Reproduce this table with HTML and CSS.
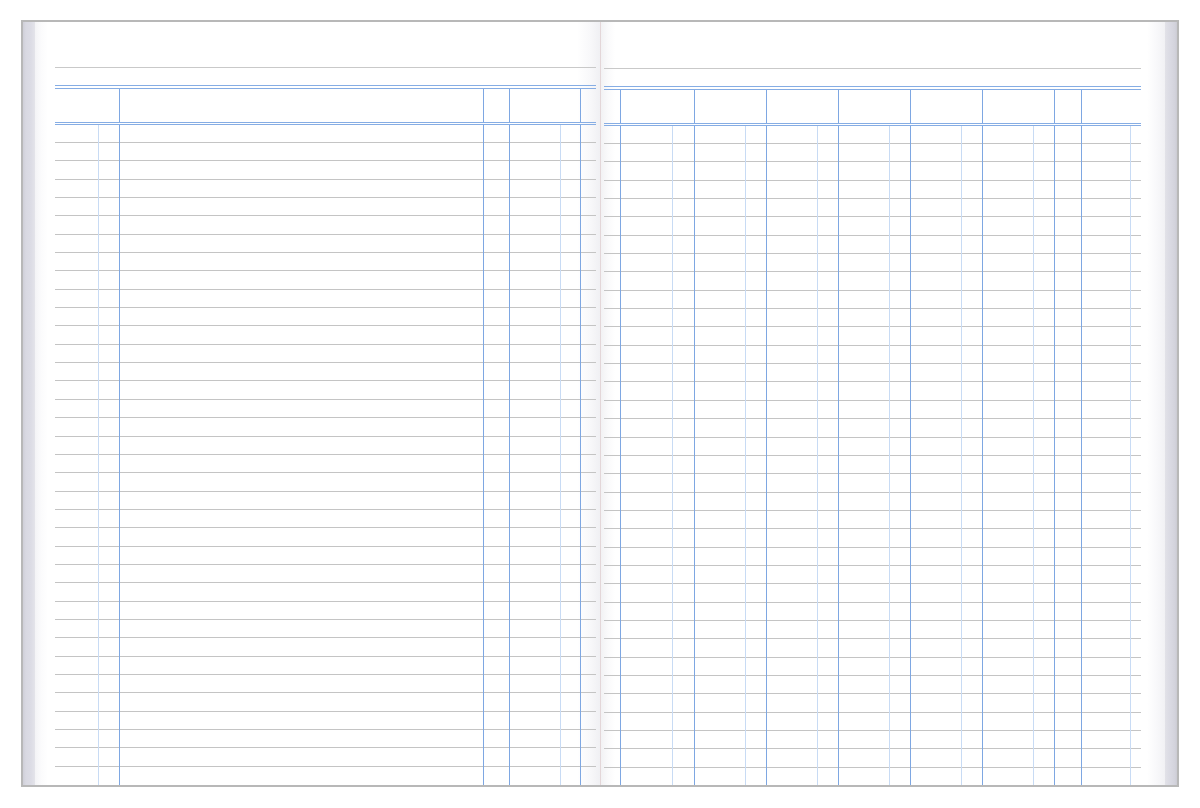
FILE: index.html
```html
<!DOCTYPE html>
<html lang="en">
<head>
<meta charset="utf-8">
<title>Ledger book spread</title>
<link rel="stylesheet" href="styles.css">
</head>
<body>
<div class="book">
  <div class="edge edge-left"></div>

  <section class="page page-left">
    <div class="sheet">
      <div class="rule-gray"></div>
      <div class="rule-blue rule-first"></div>
      <div class="rule-blue rule-pair"></div>
      <div class="head head-left">
        <div class="cell"></div><div class="cell dk"></div><div class="cell dk"></div><div class="cell dk"></div><div class="cell dk"></div>
      </div>
      <div class="rule-blue"></div>
      <div class="rule-blue rule-pair-tight"></div>
      <div class="body">
        <div class="rows">
          <div class="row"></div><div class="row"></div><div class="row"></div><div class="row"></div><div class="row"></div>
          <div class="row"></div><div class="row"></div><div class="row"></div><div class="row"></div><div class="row"></div>
          <div class="row"></div><div class="row"></div><div class="row"></div><div class="row"></div><div class="row"></div>
          <div class="row"></div><div class="row"></div><div class="row"></div><div class="row"></div><div class="row"></div>
          <div class="row"></div><div class="row"></div><div class="row"></div><div class="row"></div><div class="row"></div>
          <div class="row"></div><div class="row"></div><div class="row"></div><div class="row"></div><div class="row"></div>
          <div class="row"></div><div class="row"></div><div class="row"></div><div class="row"></div><div class="row"></div>
        </div>
        <div class="cols cols-left">
          <div class="cell"></div><div class="cell lt"></div><div class="cell dk"></div><div class="cell dk"></div><div class="cell dk"></div><div class="cell lt"></div><div class="cell dk"></div>
        </div>
      </div>
    </div>
  </section>

  <section class="page page-right">
    <div class="sheet">
      <div class="rule-gray"></div>
      <div class="rule-blue rule-first"></div>
      <div class="rule-blue rule-pair"></div>
      <div class="head head-right">
        <div class="cell"></div><div class="cell dk"></div><div class="cell dk"></div><div class="cell dk"></div><div class="cell dk"></div><div class="cell dk"></div><div class="cell dk"></div><div class="cell dk"></div><div class="cell dk"></div>
      </div>
      <div class="rule-blue"></div>
      <div class="rule-blue rule-pair-tight"></div>
      <div class="body">
        <div class="rows">
          <div class="row"></div><div class="row"></div><div class="row"></div><div class="row"></div><div class="row"></div>
          <div class="row"></div><div class="row"></div><div class="row"></div><div class="row"></div><div class="row"></div>
          <div class="row"></div><div class="row"></div><div class="row"></div><div class="row"></div><div class="row"></div>
          <div class="row"></div><div class="row"></div><div class="row"></div><div class="row"></div><div class="row"></div>
          <div class="row"></div><div class="row"></div><div class="row"></div><div class="row"></div><div class="row"></div>
          <div class="row"></div><div class="row"></div><div class="row"></div><div class="row"></div><div class="row"></div>
          <div class="row"></div><div class="row"></div><div class="row"></div><div class="row"></div><div class="row"></div>
        </div>
        <div class="cols cols-right">
          <div class="cell"></div>
          <div class="cell dk"></div><div class="cell lt"></div>
          <div class="cell dk"></div><div class="cell lt"></div>
          <div class="cell dk"></div><div class="cell lt"></div>
          <div class="cell dk"></div><div class="cell lt"></div>
          <div class="cell dk"></div><div class="cell lt"></div>
          <div class="cell dk"></div><div class="cell lt"></div>
          <div class="cell dk"></div><div class="cell dk"></div><div class="cell lt"></div>
        </div>
      </div>
    </div>
  </section>

  <div class="edge edge-right"></div>
</div>
</body>
</html>
```

FILE: styles.css
```css
html, body {
  margin: 0;
  padding: 0;
  background: #ffffff;
}

body {
  width: 1200px;
  height: 808px;
  overflow: hidden;
}

.book {
  box-sizing: border-box;
  margin: 20px 0 0 21px;
  width: 1158px;
  height: 767px;
  border: 2px solid #b8b8b8;
  display: flex;
  background: #ffffff;
}

.edge {
  width: 12px;
  flex: none;
}

.edge-left {
  background: linear-gradient(to right, #cfcfd8 0, #d9d9e2 3px, #dcdce5 8px, #e4e4ea 12px);
}

.edge-right {
  background: linear-gradient(to right, #e2e2e8 0, #dadae3 5px, #d3d3dc 10px, #cbcbd3 12px);
}

.page {
  box-sizing: border-box;
  width: 565px;
  flex: none;
  display: flex;
  flex-direction: column;
}

.page-left {
  background: linear-gradient(to right, #f3f3f6 0, #fbfbfc 6px, #ffffff 13px, #ffffff 542px, #f8f8fa 555px, #f0f0f3 565px);
}

.page-right {
  border-left: 1px solid #e3d6d8;
  background: linear-gradient(to right, #f2f2f4 0, #fafafb 7px, #ffffff 14px, #ffffff 546px, #f8f8fa 556px, #f1f1f4 564px);
}

.sheet {
  flex: 1;
  display: flex;
  flex-direction: column;
}

.page-left .sheet {
  margin: 45px 0 0 20px;
  width: 541px;
}

.page-right .sheet {
  margin: 46px 0 0 3px;
  width: 537px;
}

.rule-gray {
  height: 1px;
  background: #c9c9c9;
  flex: none;
}

.rule-blue {
  height: 1px;
  background: #86ade4;
  flex: none;
}

.rule-first {
  margin-top: 17px;
}

.rule-pair {
  margin-top: 2px;
}

.rule-pair-tight {
  margin-top: 1px;
}

.head {
  display: grid;
  height: 33px;
  flex: none;
}

.head-left {
  grid-template-columns: 64px 364px 26px 71px 16px;
}

.head-right {
  grid-template-columns: 16px 74px 72px 72px 72px 72px 72px 27px 60px;
}

.cell {
  box-sizing: border-box;
}

.cell.dk {
  border-left: 1px solid #7ea7e2;
}

.cell.lt {
  border-left: 1px solid #c8dbf4;
}

.body {
  flex: 1;
  display: grid;
}

.rows,
.cols {
  grid-area: 1 / 1;
}

.rows {
  padding-top: 17px;
  display: flex;
  flex-direction: column;
}

.row {
  box-sizing: border-box;
  height: 18.353px;
  flex: none;
  border-top: 1px solid #c4c4c4;
}

.cols {
  display: grid;
}

.cols-left {
  grid-template-columns: 43px 21px 364px 26px 51px 20px 16px;
}

.cols-right {
  grid-template-columns: 16px 52px 22px 51px 21px 51px 21px 51px 21px 51px 21px 51px 21px 27px 49px 11px;
}
```
